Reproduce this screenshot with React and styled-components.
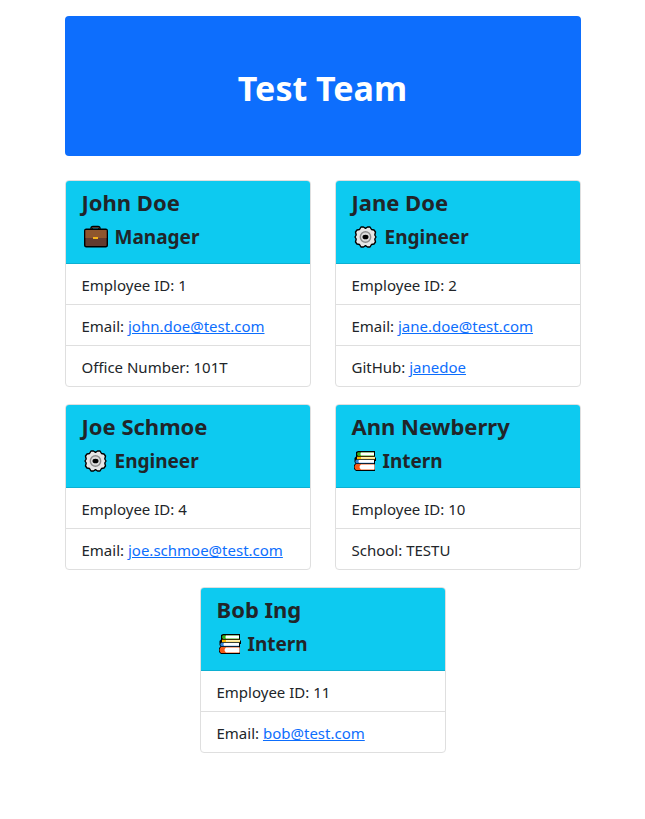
import React from "react";
import styled, { createGlobalStyle } from "styled-components";

const GlobalStyle = createGlobalStyle`
  *, *::before, *::after { box-sizing: border-box; }
  body {
    margin: 0;
    background: #fff;
    color: #212529;
    font-family: "Segoe UI", "Noto Sans", "Open Sans", sans-serif;
    font-size: 15px;
    line-height: 24px;
  }
`;

const Page = styled.div`
  max-width: 540px;
  margin: 0 auto;
  padding: 16px 12px;
`;

const Banner = styled.header`
  display: flex;
  align-items: center;
  justify-content: center;
  margin-bottom: 24px;
  padding: 50px 16px 46px;
  border-radius: 4px;
  background: #0d6efd;
  color: #fff;
`;

const Title = styled.h1`
  margin: 0;
  font-size: 34px;
  font-weight: 700;
  line-height: 44px;
`;

const Team = styled.main`
  display: flex;
  flex-wrap: wrap;
  align-items: flex-start;
  justify-content: center;
  gap: 17px 24px;
`;

const Card = styled.article`
  flex: 0 0 calc(50% - 12px);
  border: 1px solid #dfdfdf;
  border-radius: 4px;
  overflow: hidden;
  background: #fff;
`;

const CardHeader = styled.div`
  padding: 7px 16px 14px;
  border-bottom: 1px solid #0cb0d2;
  background: #0dcaf0;
`;

const Name = styled.h2`
  margin: 0 0 9px;
  font-size: 22px;
  font-weight: 700;
  line-height: 28px;
`;

const Role = styled.h3`
  display: flex;
  align-items: center;
  gap: 5px;
  margin: 0;
  font-size: 19px;
  font-weight: 700;
  line-height: 24px;
`;

const Icon = styled.svg`
  flex: none;
  width: ${({ $width }) => $width || 28}px;
  height: 24px;
`;

const Details = styled.ul`
  margin: 0;
  padding: 0;
  list-style: none;
`;

const Detail = styled.li`
  padding: 9px 16px 7px;

  & + & { border-top: 1px solid #dfdfdf; }
`;

const Link = styled.a`
  color: #0d6efd;
  text-decoration: underline;
`;

function Briefcase() {
  return (
    <Icon viewBox="0 0 28 24" aria-hidden="true">
      <path d="M9.500 6V3.500Q9.500 2 11 2H16Q17.500 2 17.500 3.500V6" fill="none" stroke="#000" strokeWidth="2.400" />
      <path d="M9.500 5.500V3.500Q9.500 2.500 11 2.500H16Q17.500 2.500 17.500 3.500V5.500" fill="none" stroke="#5b3b31" strokeWidth="1" />
      <rect x="2.700" y="4.200" width="22.600" height="17.600" rx="1.500" fill="#623b2f" stroke="#000" strokeWidth="1.400" />
      <path d="M3.500 5H24.500V13H3.500Z" fill="#8e562e" />
      <rect x="11" y="12" width="5" height="2" fill="#f5b31a" />
    </Icon>
  );
}

function Gear() {
  return (
    <Icon viewBox="0 0 28 24" aria-hidden="true">
      <path
        d="M9 2L11.500 2L13.500 3.300L15.500 2L18 2L19.500 4.500L22 5L23.500 7L22.800 10L24 12L22.800 14L23.500 17L22 19L19.500 19.500L18 22L15.500 22L13.500 20.700L11.500 22L9 22L7.500 19.500L5 19L3.500 17L4.200 14L3 12L4.200 10L3.500 7L5 5L7.500 4.500Z"
        fill="#e6e6e6" stroke="#000" strokeWidth="1.400" strokeLinejoin="round"
      />
      <circle cx="13.500" cy="12" r="5.200" fill="#dcdcdc" stroke="#8d8d8d" strokeWidth="1.400" />
      <ellipse cx="13.500" cy="12" rx="3" ry="2.300" fill="#000" />
    </Icon>
  );
}

function Books() {
  return (
    <Icon $width={26} viewBox="1 0 26 24" aria-hidden="true">
      <path d="M5 3L7 2H24V8.500H25V12H24V22H5L3 20V16L4.500 14.500L3.500 13V9L5 7.500Z" fill="#000" />
      <path d="M7 3.300H23V7H7Q5 5 7 3.300Z" fill="#35ac1c" />
      <path d="M10 3.500H23V6.500H10Q8.700 5 10 3.500Z" fill="#fff" />
      <path d="M6 7.700H24V10.200H6Z" fill="#ffb900" />
      <path d="M10 8H24V9.800H10Z" fill="#fff2b4" />
      <path d="M5 10.800H23V14.200H5Q3.500 12.500 5 10.800Z" fill="#3284d6" />
      <path d="M8 11H23V13.800H8Q6.800 12.300 8 11Z" fill="#fff" />
      <path d="M5 15H23.500V21H5Q2 18 5 15Z" fill="#f35b18" />
      <path d="M10 15.500H23.500V20.500H10Q7 18 10 15.500Z" fill="#fff" />
    </Icon>
  );
}

const icons = { Manager: Briefcase, Engineer: Gear, Intern: Books };

const team = [
  {
    name: "John Doe", role: "Manager",
    details: [["Employee ID", "1"], ["Email", "john.doe@test.com", "mailto:john.doe@test.com"], ["Office Number", "101T"]],
  },
  {
    name: "Jane Doe", role: "Engineer",
    details: [["Employee ID", "2"], ["Email", "jane.doe@test.com", "mailto:jane.doe@test.com"], ["GitHub", "janedoe", "https://github.com/janedoe"]],
  },
  {
    name: "Joe Schmoe", role: "Engineer",
    details: [["Employee ID", "4"], ["Email", "joe.schmoe@test.com", "mailto:joe.schmoe@test.com"]],
  },
  {
    name: "Ann Newberry", role: "Intern",
    details: [["Employee ID", "10"], ["School", "TESTU"]],
  },
  {
    name: "Bob Ing", role: "Intern",
    details: [["Employee ID", "11"], ["Email", "bob@test.com", "mailto:bob@test.com"]],
  },
];

function MemberCard({ name, role, details }) {
  const RoleIcon = icons[role];
  return (
    <Card>
      <CardHeader>
        <Name>{name}</Name>
        <Role><RoleIcon />{role}</Role>
      </CardHeader>
      <Details>
        {details.map(([label, value, href]) => (
          <Detail key={label}>
            {label}: {href ? <Link href={href}>{value}</Link> : value}
          </Detail>
        ))}
      </Details>
    </Card>
  );
}

export default function App() {
  return (
    <>
      <GlobalStyle />
      <Page>
        <Banner><Title>Test Team</Title></Banner>
        <Team>
          {team.map((member) => <MemberCard key={member.name} {...member} />)}
        </Team>
      </Page>
    </>
  );
}
